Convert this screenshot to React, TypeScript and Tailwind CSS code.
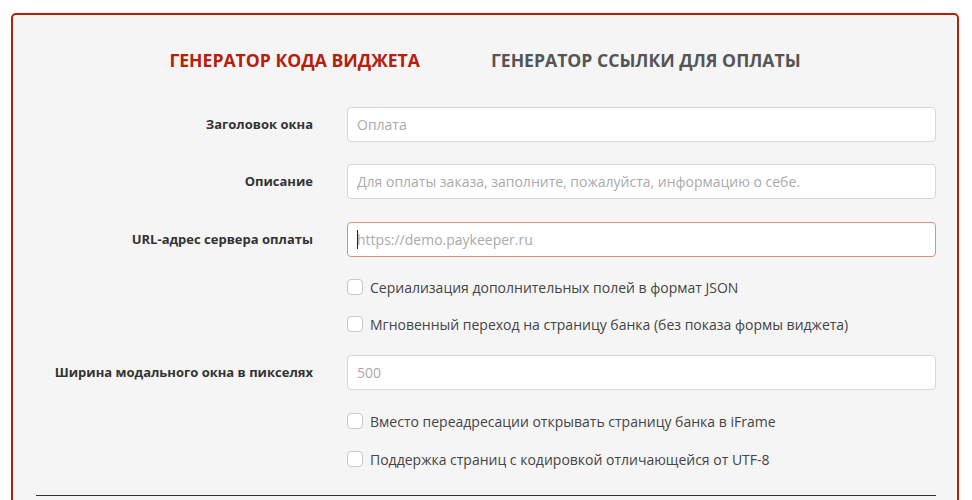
import { useState } from 'react';

const font = { fontFamily: '"Open Sans", "Noto Sans", sans-serif' };

function Field({ label, placeholder, focused }: { label: string; placeholder: string; focused?: boolean }) {
  return (
    <div className="flex items-center h-[35px]">
      <label className="w-[300px] shrink-0 text-right text-[13px] font-bold text-[#333]">{label}</label>
      <div className="relative ml-[34px] w-[589px]">
        <input
          className={`w-full h-[35px] rounded-[4px] border bg-white px-[9px] text-[14px] text-[#555] placeholder:text-[#aaa] outline-none ${
            focused ? 'border-[#d9907f]' : 'border-[#d6d6d6]'
          }`}
          placeholder={placeholder}
        />
        {focused && <span className="absolute left-[10px] top-[8px] h-[19px] w-px bg-[#222]" />}
      </div>
    </div>
  );
}

function Check({ label }: { label: string }) {
  const [on, setOn] = useState(false);
  return (
    <label className="flex items-center h-6 ml-[334px] cursor-pointer">
      <span
        onClick={() => setOn(!on)}
        className={`w-4 h-4 rounded-[4px] border border-[#c8c8c8] shrink-0 ${on ? 'bg-[#b5200d]' : 'bg-white'}`}
      />
      <span className="ml-[7px] text-[14px] text-[#444]">{label}</span>
    </label>
  );
}

export default function App() {
  const [tab, setTab] = useState(0);

  return (
    <div className="bg-white w-[972px] h-[500px] overflow-hidden pt-[13px] pl-[11px]" style={font}>
      <div className="w-[948px] h-[600px] border-2 border-[#b5200d] rounded-[5px] bg-[#f5f5f5] pt-[33px]">
        <div className="flex justify-center gap-[71px] h-6 items-center">
          <button
            onClick={() => setTab(0)}
            className={`text-[17.6px] font-bold uppercase ${tab === 0 ? 'text-[#b5200d]' : 'text-[#555]'}`}
          >
            Генератор кода виджета
          </button>
          <button
            onClick={() => setTab(1)}
            className={`text-[17.6px] font-bold uppercase ${tab === 1 ? 'text-[#b5200d]' : 'text-[#555]'}`}
          >
            Генератор ссылки для оплаты
          </button>
        </div>

        <div className="mt-[35px] flex flex-col">
          <Field label="Заголовок окна" placeholder="Оплата" />
          <div className="mt-[22px]">
            <Field label="Описание" placeholder="Для оплаты заказа, заполните, пожалуйста, информацию о себе." />
          </div>
          <div className="mt-[23px]">
            <Field label="URL-адрес сервера оплаты" placeholder="https://demo.paykeeper.ru" focused />
          </div>
          <div className="mt-[18px]">
            <Check label="Сериализация дополнительных полей в формат JSON" />
          </div>
          <div className="mt-[13px]">
            <Check label="Мгновенный переход на страницу банка (без показа формы виджета)" />
          </div>
          <div className="mt-[19px]">
            <Field label="Ширина модального окна в пикселях" placeholder="500" />
          </div>
          <div className="mt-[19px]">
            <Check label="Вместо переадресации открывать страницу банка в iFrame" />
          </div>
          <div className="mt-[14px]">
            <Check label="Поддержка страниц с кодировкой отличающейся от UTF-8" />
          </div>
          <div className="mt-[24px] ml-[23px] w-[900px] h-px bg-[#333]" />
        </div>
      </div>
    </div>
  );
}
